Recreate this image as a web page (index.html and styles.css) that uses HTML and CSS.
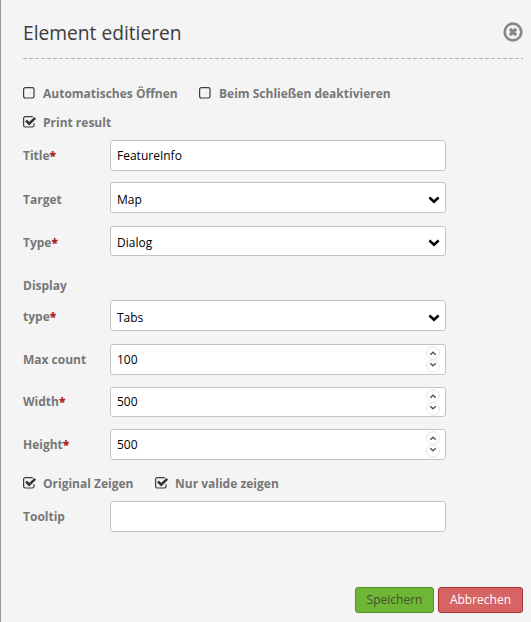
FILE: index.html
```
<!DOCTYPE html>
<html lang="de">
<head>
<meta charset="utf-8">
<title>Element editieren</title>
<link rel="stylesheet" href="styles.css">
</head>
<body>
<svg class="defs" aria-hidden="true">
  <symbol id="box" viewBox="0 0 14 12"><rect x=".6" y=".6" width="10.4" height="10.4" rx="1.7" fill="none" stroke="#3c3c3c" stroke-width="1.2"/></symbol>
  <symbol id="checked" viewBox="0 0 14 12"><path d="M11 7.2V9.3a1.7 1.7 0 0 1-1.7 1.7H2.3A1.7 1.7 0 0 1 .6 9.3V2.3A1.7 1.7 0 0 1 2.3.6H9.8" fill="none" stroke="#3c3c3c" stroke-width="1.2"/><path d="M3 4.5l3.2 3.2 6-5.9" fill="none" stroke="#333" stroke-width="2.5"/></symbol>
  <symbol id="chevron" viewBox="0 0 12 8"><path d="M1.4 1.5L6 5.7l4.6-4.2" fill="none" stroke="#000" stroke-width="2.5"/></symbol>
  <symbol id="spin" viewBox="0 0 14 27"><g fill="#fff" stroke="#e4e4e4"><ellipse cx="7" cy="7" rx="6.4" ry="6.2"/><ellipse cx="7" cy="20" rx="6.4" ry="6.2"/></g><path d="M4.3 8.7L7 6.2l2.7 2.5M4.3 17.2L7 19.7l2.7-2.5" fill="none" stroke="#555" stroke-width="1.5"/></symbol>
</svg>
<main class="dialog">
  <header class="head">
    <h1>Element editieren</h1>
    <svg class="close" viewBox="0 0 20 20"><circle cx="10" cy="10" r="8.3" fill="none" stroke="#888" stroke-width="2.7"/><path d="M6.9 6.9l6.2 6.2M13.1 6.9l-6.2 6.2" stroke="#888" stroke-width="3.4"/></svg>
  </header>
  <form class="form">
    <div class="checks first">
      <label class="check auto"><svg><use href="#box"/></svg>Automatisches Öffnen</label>
      <label class="check"><svg><use href="#box"/></svg>Beim Schließen deaktivieren</label>
    </div>
    <div class="checks print">
      <label class="check"><svg><use href="#checked"/></svg>Print result</label>
    </div>
    <div class="row title"><label>Title<b>*</b></label><div class="field">FeatureInfo</div></div>
    <div class="row target"><label>Target</label><div class="field select low">Map<svg><use href="#chevron"/></svg></div></div>
    <div class="row type"><label>Type<b>*</b></label><div class="field select short">Dialog<svg><use href="#chevron"/></svg></div></div>
    <div class="row display"><label>Display<br>type<b>*</b></label><div class="field select">Tabs<svg><use href="#chevron"/></svg></div></div>
    <div class="row count"><label>Max count</label><div class="field number">100<svg><use href="#spin"/></svg></div></div>
    <div class="row width"><label>Width<b>*</b></label><div class="field number short">500<svg><use href="#spin"/></svg></div></div>
    <div class="row height"><label>Height<b>*</b></label><div class="field number">500<svg><use href="#spin"/></svg></div></div>
    <div class="checks bottom">
      <label class="check original"><svg><use href="#checked"/></svg>Original Zeigen</label>
      <label class="check"><svg><use href="#checked"/></svg>Nur valide zeigen</label>
    </div>
    <div class="row tooltip"><label>Tooltip</label><div class="field"></div></div>
  </form>
  <footer class="actions">
    <button class="save" type="button">Speichern</button>
    <button class="cancel" type="button">Abbrechen</button>
  </footer>
</main>
</body>
</html>
```
FILE: styles.css
```
* { box-sizing: border-box; }
body { margin: 0; background: #f4f4f4; font: 12px/16px "Open Sans", "Noto Sans", sans-serif; color: #000; }
.defs { display: none; }
.dialog { height: 622px; border-left: 1px solid #999; padding: 0 8px 0 22px; display: flex; flex-direction: column; }
.head { height: 59px; padding-top: 19px; display: flex; justify-content: space-between; background: repeating-linear-gradient(90deg, #b4b4b4 0 4px, transparent 4px 6px) bottom / 100% 1px no-repeat; }
h1 { margin: 0; font-size: 19.2px; line-height: 28px; font-weight: 400; color: #3c3c3c; }
.close { width: 20px; height: 20px; margin-top: 3px; }
.form { display: flex; flex-direction: column; color: #777; font-weight: 700; }
.checks { display: flex; height: 16px; }
.check { display: flex; align-items: center; white-space: nowrap; }
.check svg { width: 14px; height: 12px; margin: 0 6px 2px 0; }
.auto { width: 176px; }
.original { width: 132px; }
.first { margin-top: 27px; }
.print { margin-top: 13px; }
.row { display: flex; align-items: center; }
.row > label { width: 87px; }
.row b { color: #b02020; }
.field { width: 336px; height: 31px; padding: 0 5px 0 6px; display: flex; align-items: center; justify-content: space-between; background: #fff; border: 1px solid #c4c4c4; border-radius: 3px; color: #000; font-weight: 400; }
.field.short { height: 30px; }
.select { padding-top: 3px; }
.field.low { padding-top: 5px; }
.display .field { padding-top: 4px; }
.select svg { width: 12px; height: 8px; margin-top: 1px; }
.low svg, .display svg { margin-top: 0; }
.number svg { width: 14px; height: 27px; }
.title { margin-top: 9px; }
.target { margin-top: 11px; }
.target label { padding-top: 4px; }
.type label { padding-top: 3px; }
.type { margin-top: 13px; }
.display { height: 54px; margin-top: 21px; align-items: flex-end; }
.display label { line-height: 31px; margin-bottom: -1px; }
.count { margin-top: 13px; }
.width { margin-top: 12px; }
.height { margin-top: 12px; }
.bottom { margin-top: 16px; }
.tooltip { margin-top: 9px; }
.actions { margin: auto 0 9px; display: flex; justify-content: flex-end; gap: 4px; }
button { height: 26px; padding: 0; border-radius: 3px; font: inherit; }
.save { width: 79px; background: #6fb536; border: 1px solid #4e9420; color: #42532f; }
.cancel { width: 85px; background: #d66464; border: 1px solid #a93030; color: #fff; }
```
